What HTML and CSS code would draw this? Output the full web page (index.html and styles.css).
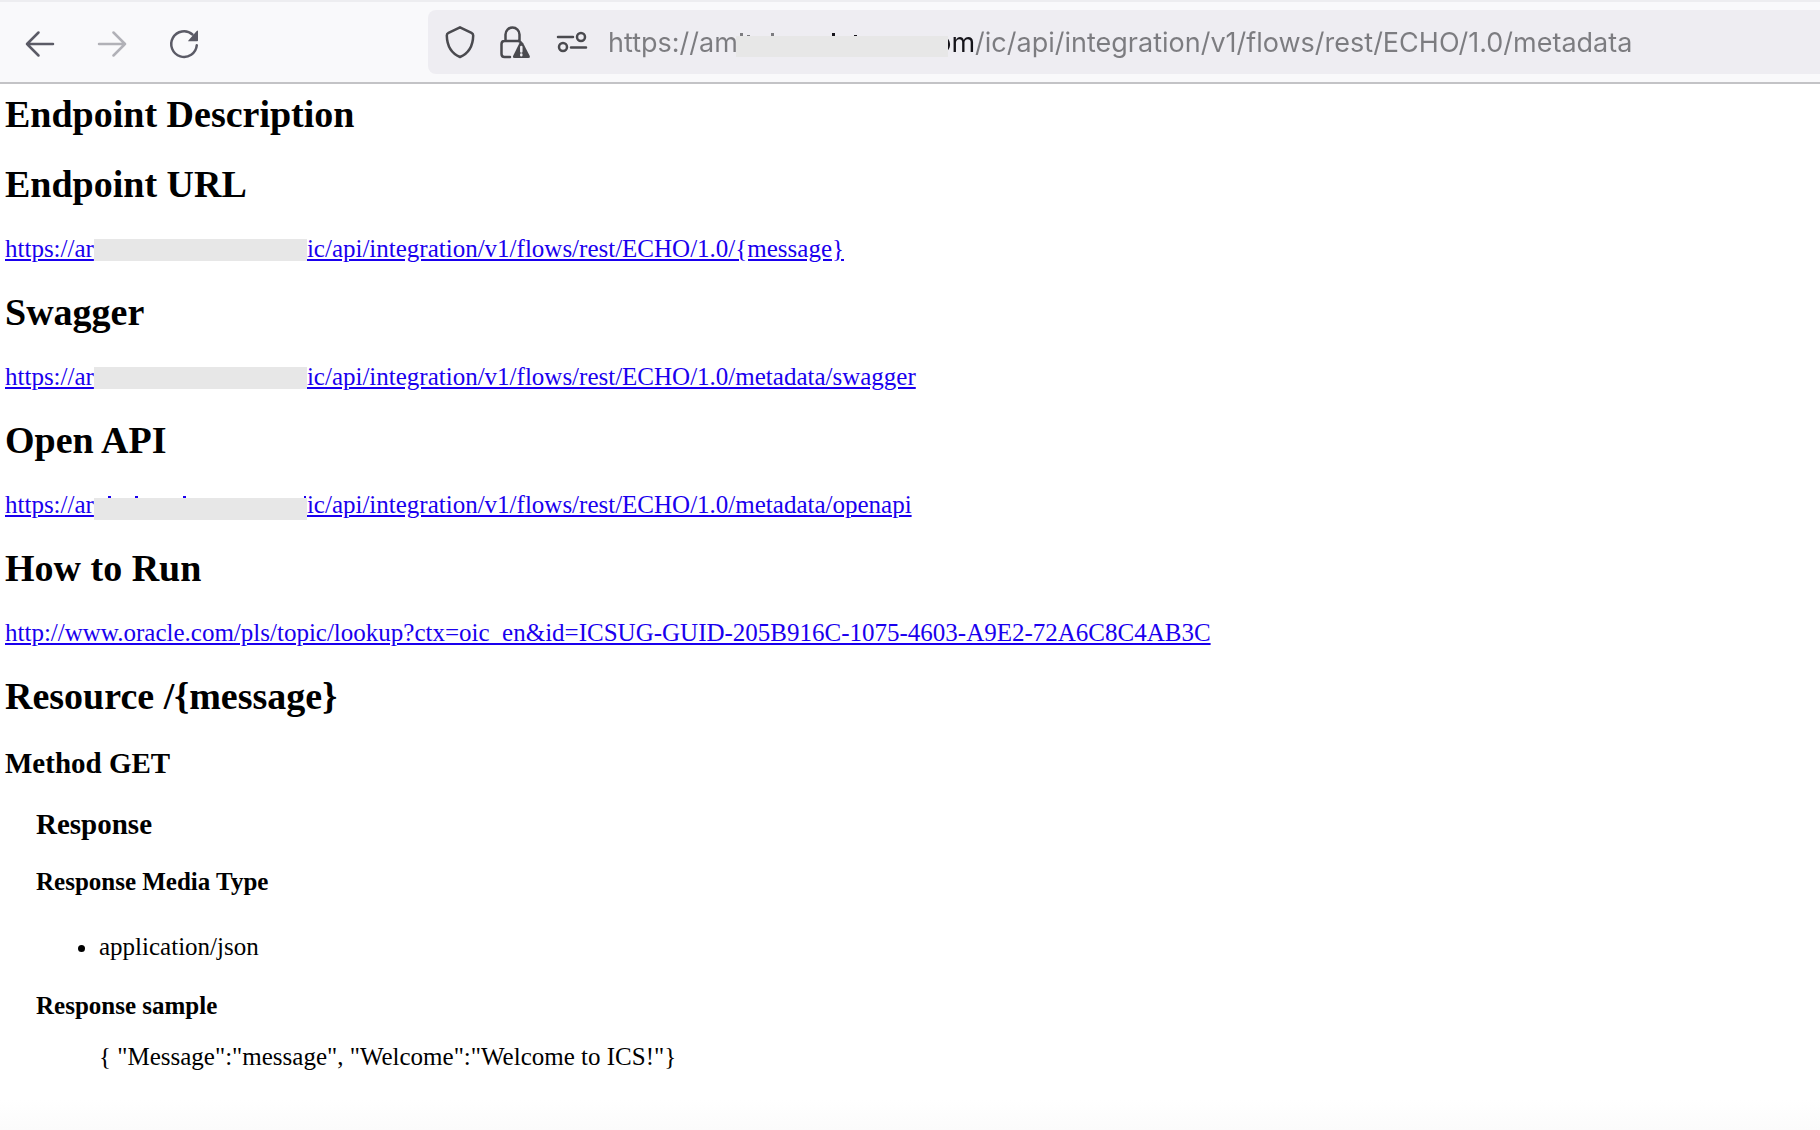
FILE: index.html
```html
<!DOCTYPE html>
<html lang="en">
<head>
  <meta charset="UTF-8">
  <title>Endpoint Description</title>
  <link rel="stylesheet" href="styles.css">
</head>
<body>
  <div class="toolbar">
    <div class="nav-buttons">
      <button type="button" aria-label="Back">
        <svg width="32" height="32" viewBox="0 0 32 32"><path d="M29 16H3M14.500 4.500L3 16l11.500 11.500"/></svg>
      </button>
      <button type="button" aria-label="Forward" disabled>
        <svg width="32" height="32" viewBox="0 0 32 32"><path d="M3 16h26M17.500 4.500L29 16 17.500 27.500"/></svg>
      </button>
      <button type="button" aria-label="Reload">
        <svg width="32" height="32" viewBox="0 0 32 32"><path d="M24.500 6.500A12.800 12.800 0 1 0 28.800 17.200"/><path class="solid" d="M30 3.200v9.300q0 .8-.8.800h-8.400q-1.200 0-.4-.9l8.300-9.400q1.300-.9 1.300.2z"/></svg>
      </button>
    </div>
    <div class="address-bar">
      <svg width="32" height="34" viewBox="0 0 32 34"><path d="M16 1.300l11.500 5.500q1.700.8 1.700 2.700C29 18.800 25 27.200 16 31 7 27.200 3 18.800 2.800 9.500q0-1.900 1.700-2.700z"/></svg>
      <svg width="32" height="34" viewBox="0 0 32 34"><path d="M5.500 15V8.500a7 7 0 0 1 14 0V15M10 31H4.500q-3 0-3-3V18q0-3 3-3H18q1.800 0 2.500 1"/><path class="solid" d="M21.300 16q-1.200 0-1.900 1.200L13.300 29.500q-1.200 2.500 1.200 2.500h13.800q2.400 0 1.200-2.500l-6.300-12.300Q22.500 16 21.300 16z"/><path class="mark" d="M21.300 21v4.500M21.300 28.500v.8"/></svg>
      <svg width="32" height="34" viewBox="0 0 32 34"><path d="M2 11h15M15 21.500h15"/><circle cx="25" cy="11" r="4"/><circle cx="7" cy="21" r="4"/></svg>
      <div class="url">
        <input type="text" aria-label="Address" value="https://am                          om/ic/api/integration/v1/flows/rest/ECHO/1.0/metadata">
        <svg class="url-mask" width="212" height="24" viewBox="0 0 212 24"><rect y="3" width="212" height="21"/><path class="dim" d="M4 0h3v3H4zM11 2h3v1h-3zM35 0h3v3h-3z"/><path d="M96 0h3v3h-3zM118 2h3v1h-3z"/></svg>
      </div>
    </div>
  </div>

  <main class="doc">
    <h2>Endpoint Description</h2>
    <h2>Endpoint URL</h2>
    <a href="#message">https://ar<span class="mask"></span>ic/api/integration/v1/flows/rest/ECHO/1.0/{message}</a>

    <h2>Swagger</h2>
    <a href="#swagger">https://ar<span class="mask"></span>ic/api/integration/v1/flows/rest/ECHO/1.0/metadata/swagger</a>

    <h2>Open API</h2>
    <a href="#openapi">https://ar<span class="mask mask-low"><svg width="213" height="2" viewBox="0 0 213 2"><path d="M14 0h3v2h-3zM41 0h3v2h-3zM89 0h3v2h-3zM210 0h2v2h-2z"/></svg></span>ic/api/integration/v1/flows/rest/ECHO/1.0/metadata/openapi</a>

    <h2>How to Run</h2>
    <a href="http://www.oracle.com/pls/topic/lookup?ctx=oic_en&amp;id=ICSUG-GUID-205B916C-1075-4603-A9E2-72A6C8C4AB3C">http://www.oracle.com/pls/topic/lookup?ctx=oic_en&amp;id=ICSUG-GUID-205B916C-1075-4603-A9E2-72A6C8C4AB3C</a>

    <h2>Resource /{message}</h2>
    <h3>Method GET</h3>
    <div class="method">
      <h3>Response</h3>
      <h4>Response Media Type</h4>
      <ul>
        <li>application/json</li>
      </ul>
      <h4>Response sample</h4>
      <p class="sample">{ "Message":"message", "Welcome":"Welcome to ICS!"}</p>
    </div>
  </main>
</body>
</html>
```
FILE: styles.css
```css
* { box-sizing: border-box; }
body {
  margin: 0;
  min-height: 100vh;
  background: linear-gradient(0deg, #fbfbfb, #fff 30px) #fff;
  color: #000;
  font: 25px/30px "Liberation Serif", "Times New Roman", serif;
}

/* --- BROWSER BAR --- */
.toolbar {
  display: flex;
  align-items: center;
  height: 84px;
  background: #f9f9fb;
  border-top: 2px solid #ededf0;
  border-bottom: 2px solid #c3c3c6;
}
.nav-buttons {
  display: flex;
  flex: none;
  gap: 40px;
  width: 428px;
  padding: 3px 0 0 24px;
}
.nav-buttons button {
  height: 32px;
  padding: 0;
  border: 0;
  background: none;
  color: #5b5b66;
}
.nav-buttons button:disabled { opacity: 0.45; }
.toolbar svg {
  display: block;
  flex: none;
  fill: none;
  stroke: currentColor;
  stroke-width: 2.5;
  stroke-linecap: round;
  stroke-linejoin: round;
}
.toolbar .solid { fill: currentColor; stroke: none; }
.toolbar .mark { stroke: #eeedf2; }
.address-bar {
  display: flex;
  flex: 1;
  align-items: center;
  gap: 24px;
  min-width: 0;
  height: 64px;
  padding: 2px 0 0 16px;
  background: #eeedf2;
  border-radius: 8px 0 0 8px;
  color: #4a4a4f;
}
.url {
  position: relative;
  flex: 1;
  min-width: 0;
  margin-left: -4px;
}
.url input {
  display: block;
  width: 100%;
  height: 40px;
  padding: 0;
  border: 0;
  outline: 0;
  /* host name is dark, the rest of the address is grey */
  background: linear-gradient(90deg, #7c7c80 300px, #15141a 300px, #15141a 367px, #7c7c80 367px);
  -webkit-background-clip: text;
  background-clip: text;
  color: transparent;
  font: 27px/40px Inter, "Liberation Sans", sans-serif;
}
.toolbar .url-mask {
  position: absolute;
  left: 128px;
  top: 10px;
  fill: #15141a;
  stroke: none;
}
.url-mask rect { fill: #e7e7e7; }
.toolbar .url-mask .dim { fill: #7c7c80; }

/* --- PAGE --- */
.doc {
  display: flow-root;
  padding: 10px 5px;
}
h2 {
  margin: 28px 0 30px;
  font-size: 38px;
  line-height: 40px;
}
h2:first-child { margin-top: 0; }
h3 {
  margin: 27px 0;
  font-size: 29px;
  line-height: 34px;
}
h4 {
  margin: 21px 0;
  font-size: 25px;
  line-height: 28px;
}
a { color: #1a00ee; }
.mask {
  display: inline-block;
  position: relative;
  width: 213px;
  height: 22px;
  background: #e7e7e7;
  vertical-align: -4px;
}
.mask-low { vertical-align: -7px; }
.mask svg {
  position: absolute;
  left: 0;
  bottom: 100%;
  fill: #1a00ee;
}
.method { padding-left: 31px; }
ul {
  margin: 36px 0 30px;
  padding-left: 63px;
}
.sample { margin: 22px 0 22px 63px; }
```
